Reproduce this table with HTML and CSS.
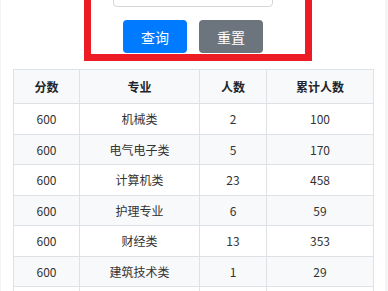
FILE: index.html
```html
<!DOCTYPE html>
<html lang="zh">
<head>
<meta charset="utf-8">
<link rel="stylesheet" href="styles.css">
</head>
<body>
<div class="page">
  <div class="search-box">
    <div class="search-inner">
      <input class="search-input" type="text">
      <div class="actions">
        <button class="btn btn-primary">查询</button>
        <button class="btn btn-secondary">重置</button>
      </div>
    </div>
  </div>
  <table class="data-table">
    <colgroup>
      <col class="c1"><col class="c2"><col class="c3"><col class="c4">
    </colgroup>
    <thead>
      <tr><th>分数</th><th>专业</th><th>人数</th><th>累计人数</th></tr>
    </thead>
    <tbody>
      <tr><td>600</td><td>机械类</td><td>2</td><td>100</td></tr>
      <tr><td>600</td><td>电气电子类</td><td>5</td><td>170</td></tr>
      <tr><td>600</td><td>计算机类</td><td>23</td><td>458</td></tr>
      <tr><td>600</td><td>护理专业</td><td>6</td><td>59</td></tr>
      <tr><td>600</td><td>财经类</td><td>13</td><td>353</td></tr>
      <tr><td>600</td><td>建筑技术类</td><td>1</td><td>29</td></tr>
      <tr><td></td><td></td><td></td><td></td></tr>
    </tbody>
  </table>
</div>
</body>
</html>
```
FILE: styles.css
```css
html, body {
  margin: 0;
  padding: 0;
  background: #f4f4f4;
  overflow: hidden;
  height: 291px;
}
body {
  font-family: "Noto Sans CJK SC", "Noto Sans", sans-serif;
  color: #212529;
}
.page {
  margin: 0 3px 0 1px;
  background: #ffffff;
  height: 400px;
  padding-top: 1px;
  margin-top: -1px;
}
.search-box {
  box-sizing: border-box;
  width: 228px;
  margin: -44px 0 0 83px;
  border: 7px solid #ed1c24;
  padding: 10px 0 1px 22px;
  background: #fff;
}
.search-inner {
  width: 160px;
}
.search-input {
  display: block;
  box-sizing: border-box;
  width: 160px;
  height: 34px;
  margin: 0;
  border: 1px solid #d6d6d6;
  border-radius: 4px;
  background: #fff;
}
.actions {
  display: flex;
  justify-content: center;
  gap: 12px;
  margin-top: 13px;
}
.btn {
  box-sizing: border-box;
  width: 64px;
  height: 33px;
  border: 0;
  border-radius: 4px;
  color: #fff;
  font-family: "Noto Sans CJK SC", "Noto Sans", sans-serif;
  font-size: 14px;
  padding: 0;
}
.btn-primary { background: #007bff; }
.btn-secondary { background: #6c757d; }
.data-table {
  margin: 8px 0 0 12px;
  width: 360px;
  border-collapse: collapse;
  table-layout: fixed;
  font-size: 12px;
}
.c1 { width: 66px; }
.c2 { width: 120px; }
.c3 { width: 67px; }
.c4 { width: 107px; }
.data-table th, .data-table td {
  border: 1px solid #dee2e6;
  text-align: center;
  padding: 0;
}
.data-table th {
  height: 33px;
  background: #f8f9fa;
  font-weight: bold;
  color: #212529;
}
.data-table td {
  height: 29.5px;
  color: #333;
}
.data-table tbody tr:nth-child(even) td {
  background: #f8f9fa;
}
```
